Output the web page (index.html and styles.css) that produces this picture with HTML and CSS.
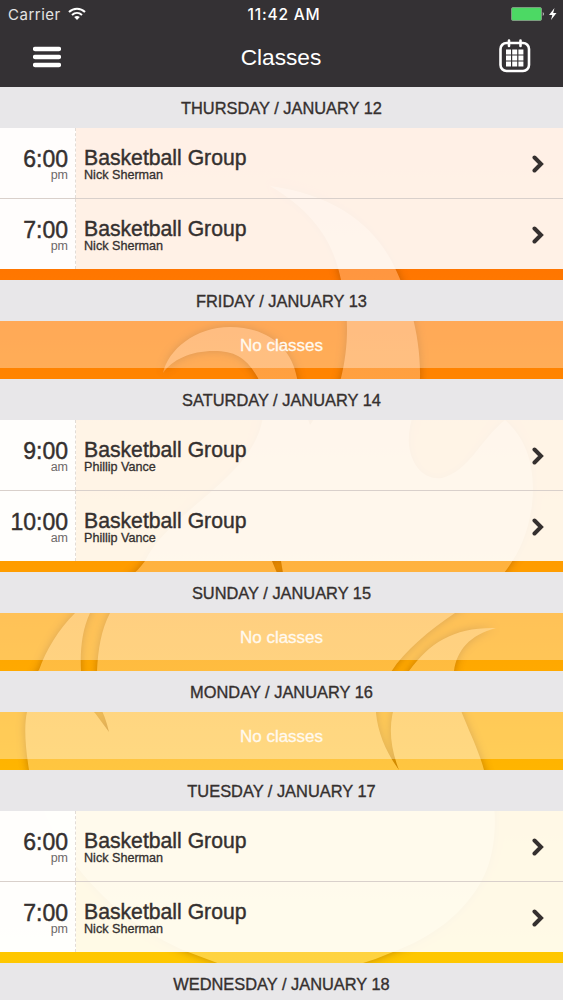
FILE: index.html
```html
<!DOCTYPE html>
<html lang="en">
<head>
    <meta charset="UTF-8">
    <meta name="viewport" content="width=device-width, initial-scale=1.0">
    <title>Classes</title>
    <link rel="stylesheet" href="styles.css">
</head>
<body>
    <!-- flame artwork behind the list -->
    <svg class="flame" viewBox="0 0 563 1000" width="563" height="1000">
        <defs>
            <linearGradient id="sky" gradientUnits="userSpaceOnUse" x1="0" y1="87" x2="0" y2="1000">
                <stop offset="0" stop-color="#ff6400"/>
                <stop offset="0.2" stop-color="#ff7600"/>
                <stop offset="0.52" stop-color="#ff9c00"/>
                <stop offset="0.75" stop-color="#ffb500"/>
                <stop offset="1" stop-color="#fecb00"/>
            </linearGradient>
            <linearGradient id="light" gradientUnits="userSpaceOnUse" x1="0" y1="87" x2="0" y2="1000">
                <stop offset="0" stop-color="#ff8b40"/>
                <stop offset="0.2" stop-color="#ff9640"/>
                <stop offset="0.52" stop-color="#ffb23f"/>
                <stop offset="0.75" stop-color="#ffc640"/>
                <stop offset="1" stop-color="#fed640"/>
            </linearGradient>
            <filter id="blur"><feGaussianBlur stdDeviation="5"/></filter>
            <path id="shape" fill-rule="evenodd" d="M270 186 C335 195 375 225 395 268 C408 295 421 335 420 378 C418 405 407 425 409 445 C412 470 428 480 442 478 C470 470 480 440 505 420 C528 440 536 470 532 505 C528 535 518 555 504 573 C490 592 472 602 455 613 C430 630 405 650 391 672 C381 688 376 700 376 713 C378 735 388 755 399 770 C389 745 388 720 397 700 C400 688 403 680 409 671 C430 642 455 627 496 628 C470 635 457 650 454 671 C450 700 475 735 484 770 C500 800 497 850 484 876 C465 915 430 938 393 952 Q377 959 360 964 C320 975 260 975 220 964 L188 952 C110 920 50 850 29 770 C25 745 24 725 27 712 C29 690 33 675 39 670 C46 650 58 630 75 613 C95 593 126 588 145 561 C175 500 290 465 258 378 C247 358 235 351 214 351 C190 351 172 360 163 373 C168 350 195 327 230 327 C265 327 291 345 297 378 C299 395 305 410 310 425 C320 410 335 395 341 378 C348 350 350 315 341 280 C335 250 320 215 270 186 Z M110 613 C130 580 175 580 200 574 C150 573 100 580 90 613 C82 630 80 650 81 671 C83 693 88 708 95 713 L109 732 Q105 715 99 705 C95 690 96 680 97 671 C98 650 101 630 110 613 Z M272 561 L281 561 L283 573 L277 573 Z"/>
        </defs>
        <rect width="563" height="1000" fill="url(#sky)"/>
        <use href="#shape" fill="#7a3b00" opacity="0.42" filter="url(#blur)"/>
        <use href="#shape" fill="url(#light)"/>
    </svg>

    <div class="app">
        <div class="topbar">
            <div class="status">
                <div class="carrier">
                    <span>Carrier</span>
                    <svg width="18" height="14" viewBox="0 0 18 14" fill="none" stroke="#fff" stroke-width="2">
                        <path d="M1 5 C5.500 0.500 12.500 0.500 17 5"/>
                        <path d="M4 8 C7 5.200 11 5.200 14 8"/>
                        <path d="M9 13 L6.200 10 Q9 8 11.800 10 Z" fill="#fff" stroke="none"/>
                    </svg>
                </div>
                <div class="clock">11:42 AM</div>
                <div class="power">
                    <svg width="47" height="16" viewBox="0 0 47 16">
                        <rect x="0.500" y="1.500" width="30" height="13" rx="1.500" fill="#4cd964" stroke="#7d9c80"/>
                        <path d="M31.800 6 Q33.800 8 31.800 10 Z" fill="#ddd"/>
                        <path d="M43.500 2 L38 9 L41.300 9 L40 14 L45.500 7 L42.200 7 Z" fill="#fff"/>
                    </svg>
                </div>
            </div>
            <div class="nav">
                <svg width="28" height="22" viewBox="0 0 28 22" stroke="#fff" stroke-width="4.300" stroke-linecap="round">
                    <path d="M2 3 H26 M2 11 H26 M2 19 H26"/>
                </svg>
                <h1>Classes</h1>
                <svg class="calendar" width="32" height="34" viewBox="0 0 32 34">
                    <rect x="1.500" y="4" width="28.500" height="28" rx="6" fill="none" stroke="#fff" stroke-width="2.600"/>
                    <path d="M10 1.500 V7 M21.500 1.500 V7" stroke="#fff" stroke-width="2.600" stroke-linecap="round"/>
                    <path d="M7 10.500 h5v5h-5z m6.200 0 h5v5h-5z m6.200 0 h5v5h-5z M7 16.500 h5v5h-5z m6.200 0 h5v5h-5z m6.200 0 h5v5h-5z M7 22.500 h5v5h-5z m6.200 0 h5v5h-5z m6.200 0 h5v5h-5z" fill="#fff"/>
                </svg>
            </div>
        </div>

        <div class="day">
            <h2>THURSDAY / JANUARY 12</h2>
            <div class="row">
                <div class="time"><b>6:00</b><span>pm</span></div>
                <div class="info"><h3>Basketball Group</h3><p>Nick Sherman</p></div>
                <svg class="arrow" width="12" height="18" viewBox="0 0 12 18"><path d="M2.500 2.500 L9 9 L2.500 15.500"/></svg>
            </div>
            <div class="row">
                <div class="time"><b>7:00</b><span>pm</span></div>
                <div class="info"><h3>Basketball Group</h3><p>Nick Sherman</p></div>
                <svg class="arrow" width="12" height="18" viewBox="0 0 12 18"><path d="M2.500 2.500 L9 9 L2.500 15.500"/></svg>
            </div>
        </div>

        <div class="day">
            <h2>FRIDAY / JANUARY 13</h2>
            <div class="empty">No classes</div>
        </div>

        <div class="day">
            <h2>SATURDAY / JANUARY 14</h2>
            <div class="row">
                <div class="time"><b>9:00</b><span>am</span></div>
                <div class="info"><h3>Basketball Group</h3><p>Phillip Vance</p></div>
                <svg class="arrow" width="12" height="18" viewBox="0 0 12 18"><path d="M2.500 2.500 L9 9 L2.500 15.500"/></svg>
            </div>
            <div class="row">
                <div class="time"><b>10:00</b><span>am</span></div>
                <div class="info"><h3>Basketball Group</h3><p>Phillip Vance</p></div>
                <svg class="arrow" width="12" height="18" viewBox="0 0 12 18"><path d="M2.500 2.500 L9 9 L2.500 15.500"/></svg>
            </div>
        </div>

        <div class="day">
            <h2>SUNDAY / JANUARY 15</h2>
            <div class="empty">No classes</div>
        </div>

        <div class="day">
            <h2>MONDAY / JANUARY 16</h2>
            <div class="empty">No classes</div>
        </div>

        <div class="day">
            <h2>TUESDAY / JANUARY 17</h2>
            <div class="row">
                <div class="time"><b>6:00</b><span>pm</span></div>
                <div class="info"><h3>Basketball Group</h3><p>Nick Sherman</p></div>
                <svg class="arrow" width="12" height="18" viewBox="0 0 12 18"><path d="M2.500 2.500 L9 9 L2.500 15.500"/></svg>
            </div>
            <div class="row">
                <div class="time"><b>7:00</b><span>pm</span></div>
                <div class="info"><h3>Basketball Group</h3><p>Nick Sherman</p></div>
                <svg class="arrow" width="12" height="18" viewBox="0 0 12 18"><path d="M2.500 2.500 L9 9 L2.500 15.500"/></svg>
            </div>
        </div>

        <div class="day">
            <h2>WEDNESDAY / JANUARY 18</h2>
        </div>
    </div>
</body>
</html>
```

FILE: styles.css
```css
* {
    box-sizing: border-box;
}

body {
    margin: 0;
    height: 1000px;
    overflow: hidden;
    font-family: "Liberation Sans", Arial, sans-serif;
    color: #35302f;
}

h1, h2, h3, p {
    margin: 0;
    font-weight: normal;
}

.flame {
    position: absolute;
    top: 0;
    left: 0;
    z-index: -1;
}

.app {
    height: 1000px;
    overflow: hidden;
}

.topbar {
    height: 87px;
    background-color: #343134;
    color: white;
}

.status {
    display: grid;
    grid-template-columns: 1fr auto 1fr;
    align-items: center;
    height: 28px;
    padding: 0 5px 0 8px;
    font-family: Inter, sans-serif;
    font-size: 15px;
}

.carrier {
    display: flex;
    align-items: center;
    gap: 7px;
    color: #e4e4e4;
    letter-spacing: 0.5px;
}

.clock {
    padding-left: 2px;
    font-weight: 500;
    font-size: 15.5px;
    letter-spacing: 0.8px;
}

.power {
    display: flex;
    justify-content: flex-end;
}

.nav {
    display: flex;
    justify-content: space-between;
    align-items: center;
    height: 58px;
    padding: 0 32px 0 33px;
}

.nav h1 {
    padding-left: 2px;
    font-size: 22.7px;
}

.calendar {
    margin-top: -2px;
}

.day {
    margin-bottom: 11px;
}

.day h2 {
    height: 41px;
    line-height: 42px;
    text-align: center;
    font-size: 16.4px;
    background-color: #e8e7e9;
    -webkit-text-stroke: 0.35px #35302f;
}

.row {
    display: flex;
    align-items: center;
    height: 71px;
    border-bottom: 1px solid rgba(110, 90, 80, 0.25);
    background-color: rgba(255, 255, 255, 0.9);
    background-clip: padding-box;
}

.row:first-of-type {
    border-bottom-color: #d9d0cb;
}

.row + .row {
    height: 70px;
    border-bottom: none;
}

.time {
    display: flex;
    flex-direction: column;
    justify-content: center;
    align-items: flex-end;
    width: 76px;
    height: 100%;
    padding: 3px 7px 0 0;
    background-color: rgba(255, 255, 255, 0.85);
    border-right: 1px dashed #e2dcd6;
}

.time b {
    font-size: 23px;
    line-height: 21px;
    font-weight: normal;
    -webkit-text-stroke: 0.45px #35302f;
}

.time span {
    font-size: 12.5px;
    line-height: 11px;
    color: #6d6868;
}

.info {
    flex: 1;
    padding: 1px 0 0 8px;
}

.info h3 {
    font-size: 21.2px;
    line-height: 22px;
    -webkit-text-stroke: 0.4px #35302f;
}

.info p {
    font-size: 12.6px;
    line-height: 12px;
    -webkit-text-stroke: 0.3px #35302f;
}

.arrow {
    margin: 2px 19px 0 0;
    fill: none;
    stroke: #35302f;
    stroke-width: 4;
    stroke-linecap: round;
}

.empty {
    height: 47px;
    line-height: 49px;
    text-align: center;
    font-size: 17px;
    color: #fffaf0;
    background-color: rgba(255, 255, 255, 0.34);
    -webkit-text-stroke: 0.3px #fffaf0;
}
```
